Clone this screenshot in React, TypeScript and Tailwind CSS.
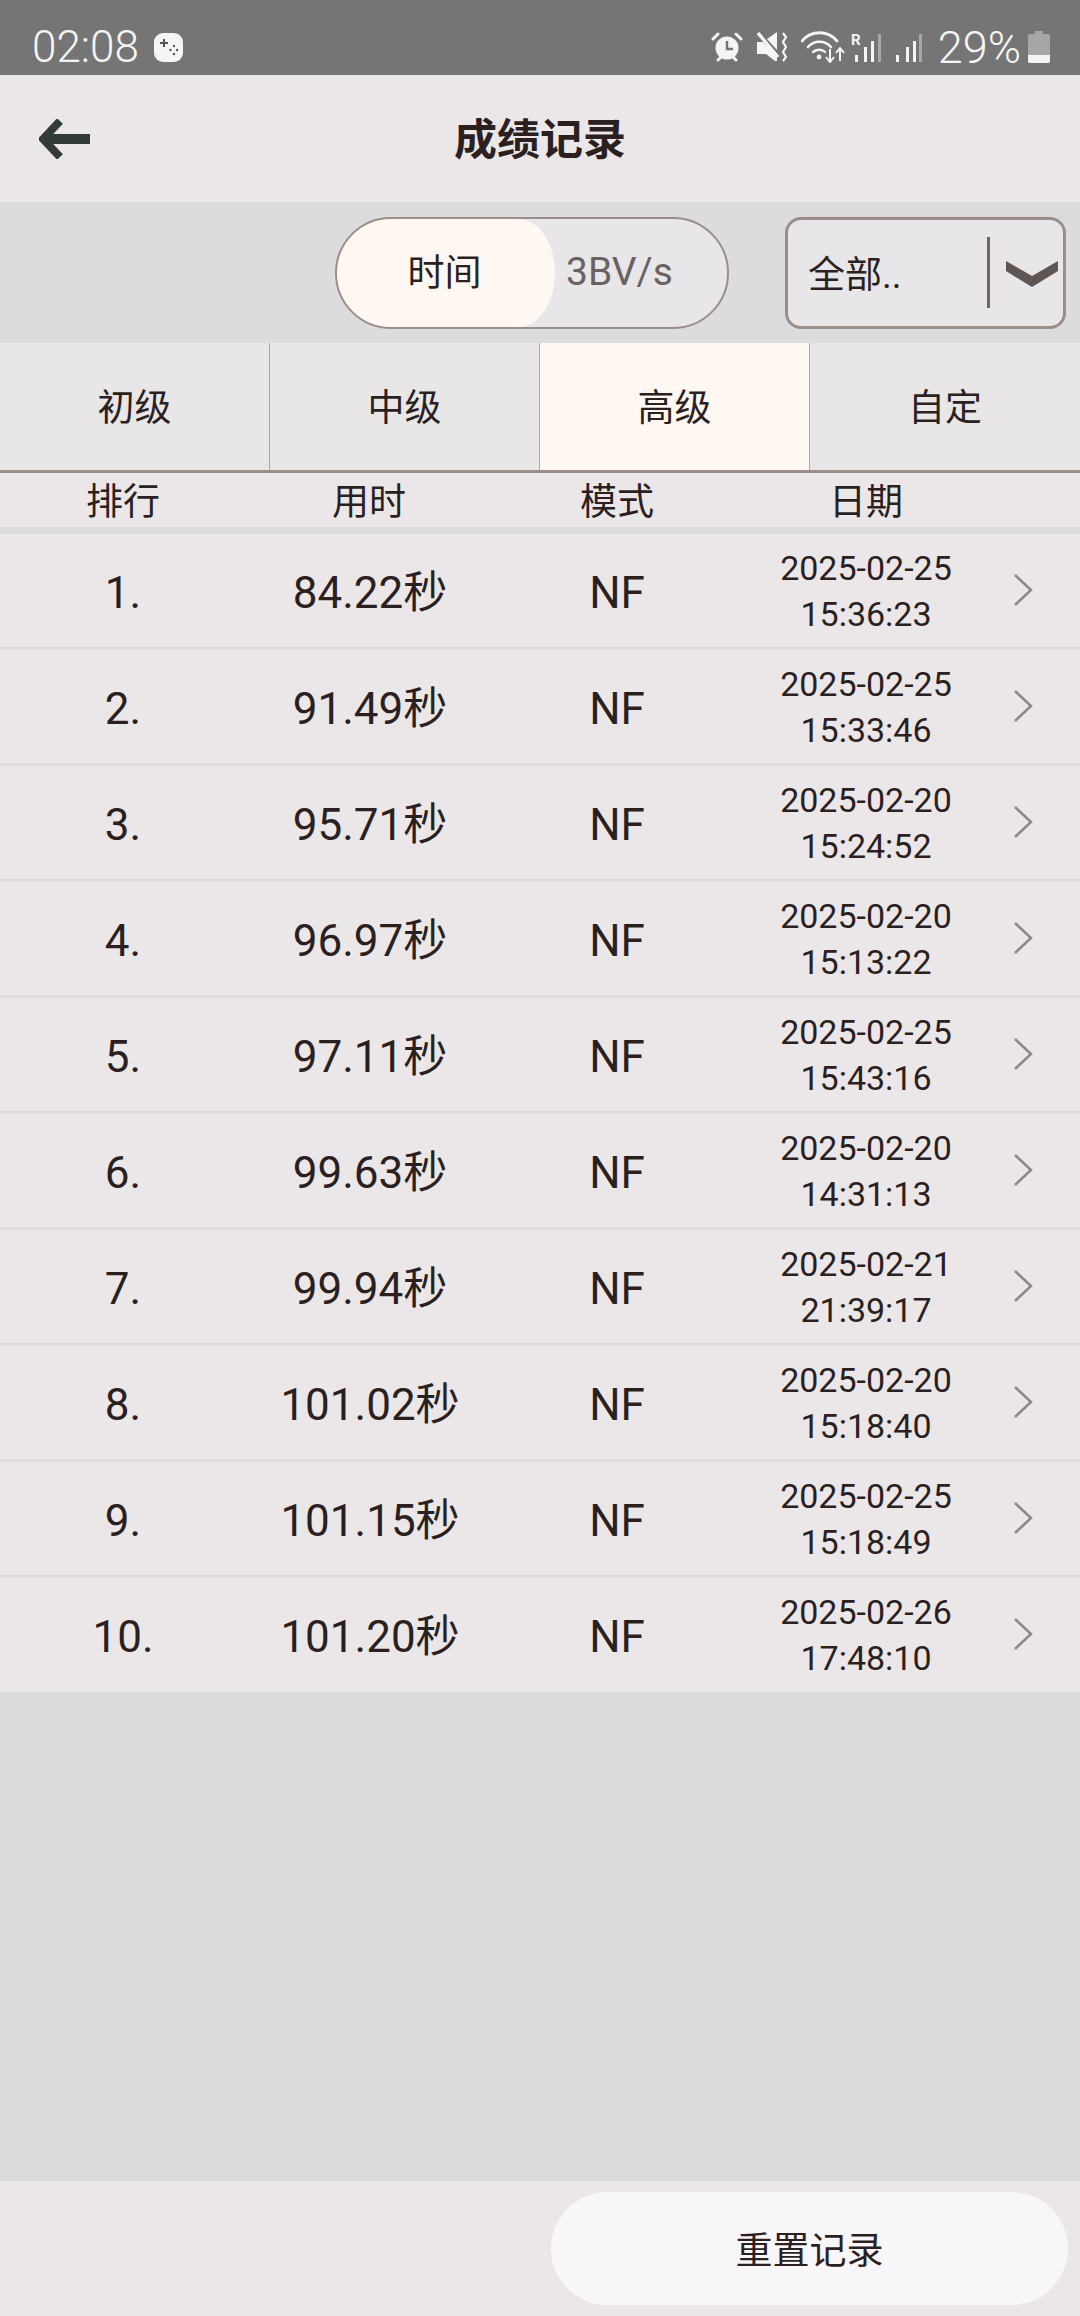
const records = [
  { rank: '1.', time: '84.22秒', date: '2025-02-25', clock: '15:36:23' },
  { rank: '2.', time: '91.49秒', date: '2025-02-25', clock: '15:33:46' },
  { rank: '3.', time: '95.71秒', date: '2025-02-20', clock: '15:24:52' },
  { rank: '4.', time: '96.97秒', date: '2025-02-20', clock: '15:13:22' },
  { rank: '5.', time: '97.11秒', date: '2025-02-25', clock: '15:43:16' },
  { rank: '6.', time: '99.63秒', date: '2025-02-20', clock: '14:31:13' },
  { rank: '7.', time: '99.94秒', date: '2025-02-21', clock: '21:39:17' },
  { rank: '8.', time: '101.02秒', date: '2025-02-20', clock: '15:18:40' },
  { rank: '9.', time: '101.15秒', date: '2025-02-25', clock: '15:18:49' },
  { rank: '10.', time: '101.20秒', date: '2025-02-26', clock: '17:48:10' },
];

const levels = ['初级', '中级', '高级', '自定'];
const columns = 'grid grid-cols-[246px_246px_250px_248px_90px]';

function StatusIcons() {
  return (
    <div className="flex items-center">
      {/* alarm */}
      <svg width="32" height="30" viewBox="0 0 32 30" className="mr-[14px]">
        <circle cx="16" cy="16" r="11.5" fill="#f5f5f5" />
        <path d="M16 9v8h6" fill="none" stroke="#757575" strokeWidth="2.4" />
        <path d="M2 7l5-5M30 7l-5-5" stroke="#f5f5f5" strokeWidth="3" strokeLinecap="round" />
        <path d="M7 28l3-3M25 28l-3-3" stroke="#f5f5f5" strokeWidth="3" strokeLinecap="round" />
      </svg>
      {/* vibrate / mute */}
      <svg width="32" height="30" viewBox="0 0 32 30" className="mr-[12px]">
        <path d="M0 10h6l14 14v5h-2l-9-7H0z M10 7l10-7v18z" fill="#f5f5f5" />
        <path d="M1 1l20 24" stroke="#f5f5f5" strokeWidth="3.4" />
        <path d="M26 1l3 4-3 5 3 5-3 5 3 5-3 4" fill="none" stroke="#f5f5f5" strokeWidth="2.2" />
      </svg>
      {/* wifi */}
      <svg width="44" height="32" viewBox="0 0 44 32" className="mr-[6px]">
        <path d="M1 10C10 -1 27 -1 36 10" fill="none" stroke="#f5f5f5" strokeWidth="2.8" strokeLinecap="round" />
        <path d="M7 16c6-7 17-7 23 0" fill="none" stroke="#f5f5f5" strokeWidth="2.6" strokeLinecap="round" />
        <path d="M12 21c4-3 9-3 12 0" fill="none" stroke="#f5f5f5" strokeWidth="2.4" strokeLinecap="round" />
        <circle cx="18" cy="26" r="2.4" fill="#f5f5f5" />
        <path d="M29 18v12M25 26l4 5 4-5" fill="none" stroke="#f5f5f5" strokeWidth="2" />
        <path d="M39 30V18M35 22l4-5 4 5" fill="none" stroke="#f5f5f5" strokeWidth="2" />
      </svg>
      {/* signal with roaming */}
      <svg width="30" height="32" viewBox="0 0 30 32" className="mr-[15px]">
        <text x="0" y="14" fontSize="15" fontWeight="700" fill="#f5f5f5" fontFamily="Roboto, sans-serif">R</text>
        <rect x="4" y="24" width="3" height="7" fill="#f5f5f5" />
        <rect x="13" y="16" width="3" height="15" fill="#f5f5f5" />
        <rect x="20" y="10" width="3" height="21" fill="#f5f5f5" />
        <rect x="27" y="3" width="3" height="28" fill="#a8a8a8" />
      </svg>
      {/* signal */}
      <svg width="26" height="32" viewBox="0 0 26 32" className="mr-[16px]">
        <rect x="0" y="24" width="3" height="7" fill="#f5f5f5" />
        <rect x="10" y="16" width="3" height="15" fill="#f5f5f5" />
        <rect x="17" y="10" width="3" height="21" fill="#f5f5f5" />
        <rect x="23" y="3" width="3" height="28" fill="#a8a8a8" />
      </svg>
      <span className="text-[45px] leading-none font-light text-[#f5f5f5] mr-[7px]">29%</span>
      {/* battery */}
      <svg width="22" height="32" viewBox="0 0 22 32">
        <path d="M7 0h8v3h5a2 2 0 0 1 2 2v25a2 2 0 0 1-2 2H2a2 2 0 0 1-2-2V5a2 2 0 0 1 2-2h5z" fill="#a6a6a6" />
        <path d="M0 24h22v6a2 2 0 0 1-2 2H2a2 2 0 0 1-2-2z" fill="#f5f5f5" />
      </svg>
    </div>
  );
}

export default function App() {
  return (
    <div className="w-[1080px] h-[2316px] flex flex-col bg-[#dcdcde] text-[#2b1f1f] font-['Roboto','Noto_Sans_CJK_SC',sans-serif] overflow-hidden">
      {/* Status bar */}
      <div className="h-[75px] bg-[#757575] flex items-center justify-between pl-[32px] pr-[30px] pt-[19px]">
        <div className="flex items-center">
          <span className="text-[44px] leading-none font-light text-[#f5f5f5]">02:08</span>
          <svg width="29" height="29" viewBox="0 0 29 29" className="ml-[15px]">
            <rect width="29" height="29" rx="9" fill="#f5f5f5" />
            <path d="M10 6v8M6 10h8" stroke="#555" strokeWidth="2" />
            <circle cx="20" cy="13" r="1.2" fill="#555" />
            <circle cx="16.500" cy="17" r="1.2" fill="#555" />
            <circle cx="23" cy="17" r="1.2" fill="#555" />
            <circle cx="20" cy="21" r="1.2" fill="#555" />
          </svg>
        </div>
        <StatusIcons />
      </div>

      {/* Header */}
      <div className="relative h-[127px] bg-[#ebe7e8] flex items-center justify-center pt-[4px]">
        <svg width="52" height="40" viewBox="0 0 52 40" className="absolute left-[39px] top-[44px]">
          <path d="M21 2L4 20l17 18" fill="none" stroke="#323a3a" strokeWidth="8" />
          <path d="M8 20h43" stroke="#323a3a" strokeWidth="10" />
        </svg>
        <h1 className="text-[43px] font-bold leading-none">成绩记录</h1>
      </div>

      {/* Filters */}
      <div className="h-[141px] flex items-center justify-end pr-[14px]">
        <div className="relative w-[394px] h-[112px] rounded-[56px] border-2 border-[#9c8d89] bg-[#e8e6e9] flex items-center overflow-hidden mr-[56px]">
          <div className="w-[218px] h-full bg-[#fff8f2] rounded-[56px_38px_38px_56px/56px] flex items-center justify-center text-[37px] pt-[3px] pr-[3px]">
            时间
          </div>
          <span className="ml-[11px] text-[39px] text-[#6a6262]">3BV/s</span>
        </div>
        <div className="w-[281px] h-[112px] rounded-[16px] border-[3px] border-[#9c8d89] bg-[#e8e6e9] flex items-center pl-[20px]">
          <span className="w-[179px] text-[37px] pt-[6px]">全部..</span>
          <div className="w-[3px] h-[71px] bg-[#6f6663]" />
          <svg width="52" height="26" viewBox="0 0 52 26" className="ml-[16px] mt-[2px]">
            <path d="M0 0l26 15L52 0v10L26 26 0 10z" fill="#5f5654" />
          </svg>
        </div>
      </div>

      {/* Level tabs */}
      <div className="h-[130px] grid grid-cols-4 bg-[#e9e6e8] border-b-[3px] border-[#9c8d89]">
        {levels.map((level, i) => (
          <div
            key={level}
            className={`flex items-center justify-center text-[37px] pt-[4px] ${i === 2 ? 'bg-[#fff8f2]' : ''} ${i < 3 ? 'border-r border-[#b0a5a2]' : ''}`}
          >
            {level}
          </div>
        ))}
      </div>

      {/* Table head */}
      <div className={`${columns} h-[54px] bg-[#ebe7e8] items-center text-center text-[37px] leading-none pt-[5px]`}>
        <span>排行</span>
        <span>用时</span>
        <span>模式</span>
        <span>日期</span>
      </div>

      {/* Records */}
      <div className="mt-[7px] flex flex-col">
        {records.map((r, i) => (
          <div
            key={r.rank}
            className={`${columns} items-center text-center bg-[#ebe7e8] ${i < records.length - 1 ? 'h-[116px] border-b-[3px] border-[#dedcdd]' : 'h-[114px]'}`}
          >
            <span className="text-[44px] pt-[4px]">{r.rank}</span>
            <span className="text-[44px] pt-[4px] pl-[2px]">{r.time}</span>
            <span className="text-[44px] pt-[4px]">NF</span>
            <div className="text-[34px] leading-[46px]">
              <div>{r.date}</div>
              <div>{r.clock}</div>
            </div>
            <svg width="20" height="34" viewBox="0 0 20 34" className="ml-[23px] mb-[2px]">
              <path d="M2 2l16 15L2 32" fill="none" stroke="#8c8888" strokeWidth="2.6" />
            </svg>
          </div>
        ))}
      </div>

      <div className="flex-1" />

      {/* Bottom bar */}
      <div className="h-[135px] bg-[#ebe7e8] flex justify-end items-start pt-[11px] pr-[12px]">
        <button className="w-[517px] h-[113px] rounded-[57px] bg-[#f9f6f9] text-[37px] pt-[6px]">重置记录</button>
      </div>
    </div>
  );
}
